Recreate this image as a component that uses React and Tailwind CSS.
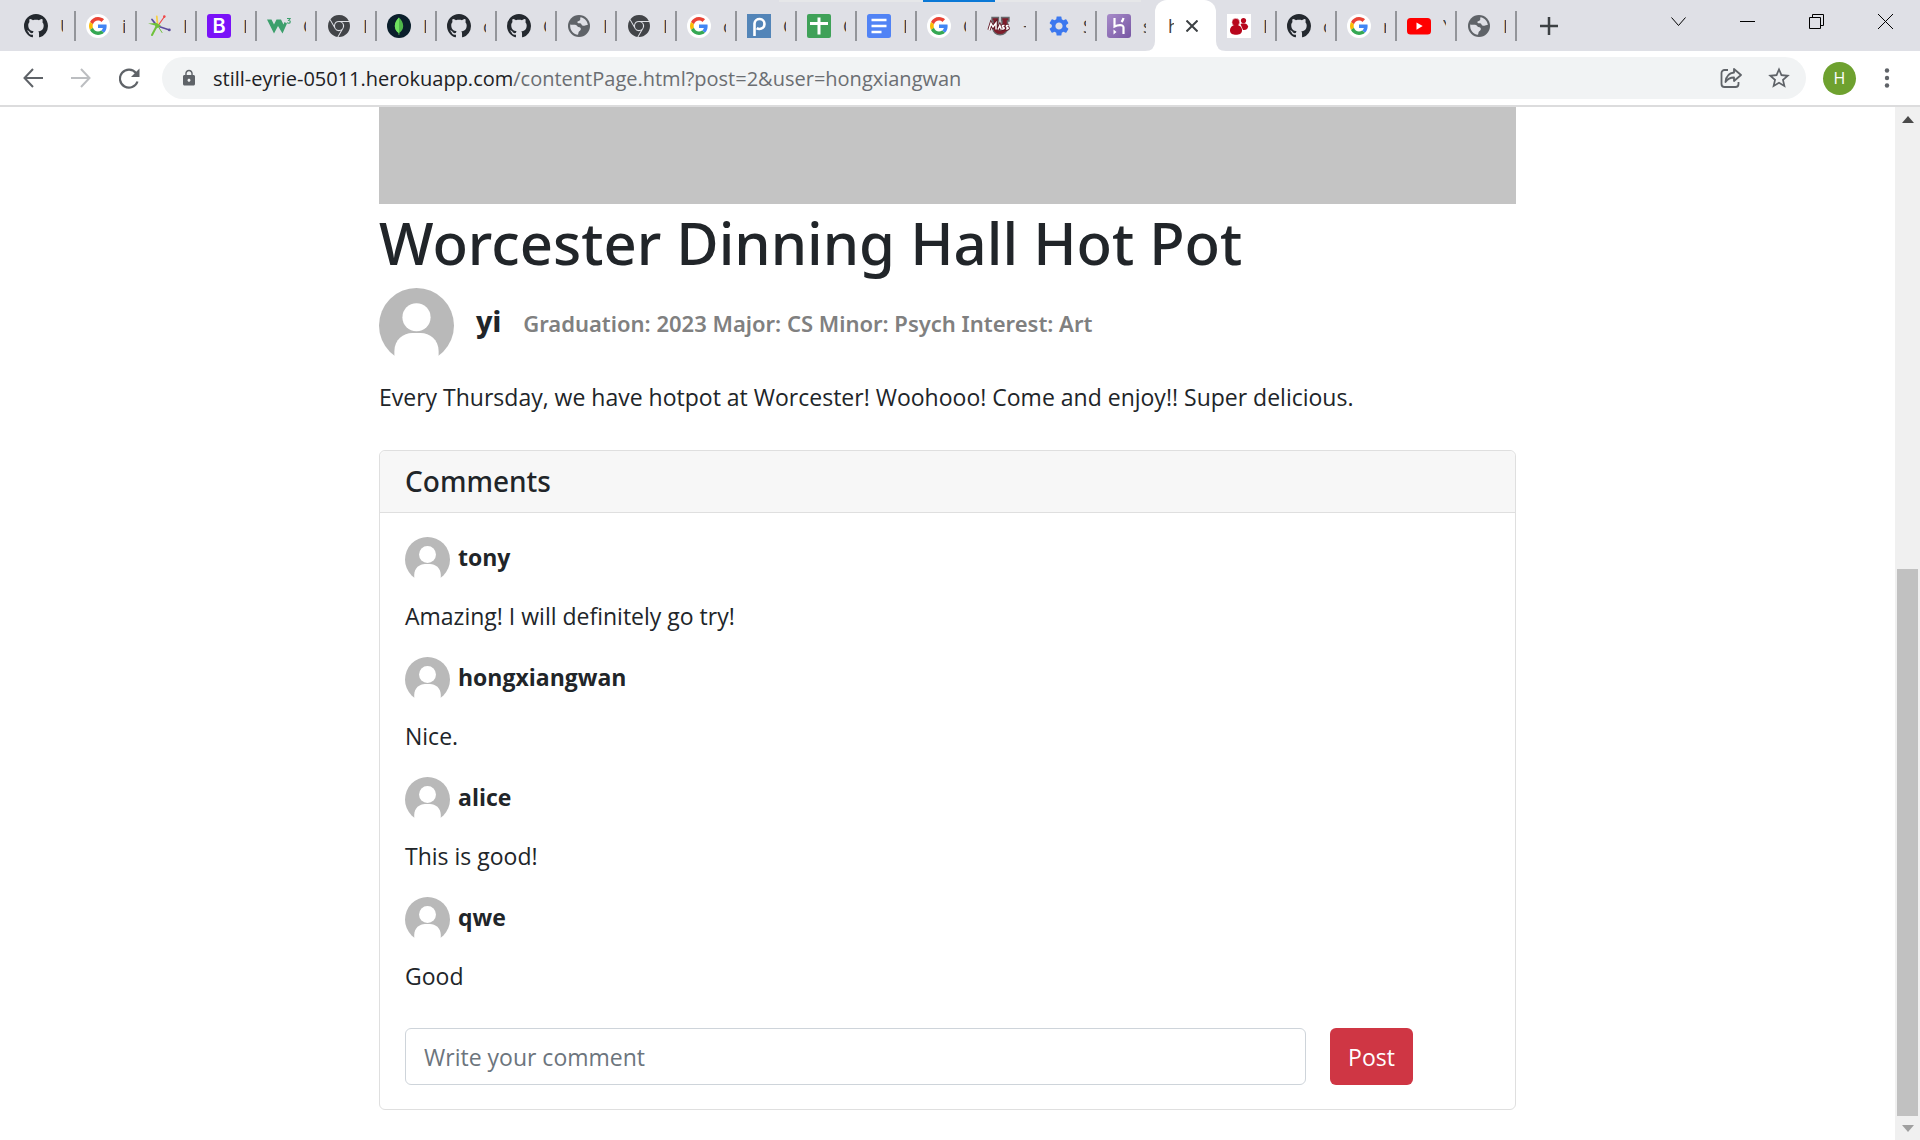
import { VscGithubInverted } from "react-icons/vsc";
import { SiGooglechrome } from "react-icons/si";
import { MdSettings, MdStarBorder, MdLock } from "react-icons/md";

const Github = () => <VscGithubInverted className="size-6 text-[#24292f]" />;

const Google = () => (
  <span className="flex size-6 items-center justify-center rounded-full bg-white">
    <svg viewBox="0 0 48 48" className="size-[18px]">
      <path fill="#EA4335" d="M24 9.5c3.54 0 6.71 1.22 9.21 3.6l6.85-6.85C35.9 2.38 30.47 0 24 0 14.62 0 6.51 5.38 2.56 13.22l7.98 6.19C12.43 13.72 17.74 9.5 24 9.5z" />
      <path fill="#4285F4" d="M46.98 24.55c0-1.57-.15-3.09-.38-4.55H24v9.02h12.94c-.58 2.96-2.26 5.48-4.78 7.18l7.73 6c4.51-4.18 7.09-10.36 7.09-17.65z" />
      <path fill="#FBBC05" d="M10.53 28.59c-.48-1.45-.76-2.99-.76-4.59s.27-3.14.76-4.59l-7.98-6.19C.92 16.46 0 20.12 0 24s.92 7.54 2.56 10.78l7.97-6.19z" />
      <path fill="#34A853" d="M24 48c6.48 0 11.93-2.13 15.89-5.81l-7.73-6c-2.15 1.45-4.92 2.3-8.16 2.3-6.26 0-11.57-4.22-13.47-9.91l-7.98 6.19C6.51 42.62 14.62 48 24 48z" />
    </svg>
  </span>
);

const Burst = () => (
  <svg viewBox="0 0 24 24" className="size-6" strokeLinecap="round" fill="none">
    <path d="M11.500 11 17.500 2.500" stroke="#ef4a4a" strokeWidth="1.200" />
    <circle cx="17.300" cy="2.600" r="1.300" fill="#ef4a4a" />
    <path d="M10.500 10 9.800 2.500" stroke="#f7d04a" strokeWidth="1.800" />
    <path d="M9 10.500 5 5.500" stroke="#5b4a9e" strokeWidth="1.800" />
    <path d="M12 12.500 22.500 16" stroke="#5b4a9e" strokeWidth="1.500" />
    <circle cx="22.300" cy="15.900" r="1.400" fill="#5b4a9e" />
    <path d="M1 9.500 9.500 9 14 11.500 9.500 14.500 8 11.500z" fill="#6fc13b" />
    <path d="M9.500 12.500 5 21" stroke="#6fc13b" strokeWidth="2" />
    <path d="M11.500 13 15 18.500" stroke="#6fc13b" strokeWidth="1" />
  </svg>
);

const Bootstrap = () => (
  <span className="flex size-6 items-center justify-center rounded-[3px] bg-[#7a12f8] font-['Inter',sans-serif] text-xl leading-6 font-semibold text-white">B</span>
);

const W3 = () => (
  <svg viewBox="0 0 24 24" className="size-6" fill="#3c9f6c">
    <path d="M0 5.500h4.500l2.500 5 2.500-5H14l2.500 5 1-2.500 2.500 1.500-4.500 10-4.500-7.500-4 7.500z" />
    <path d="M20 4.500h3.200l-1.500 1.900c2.200 0 1.900 3-.1 2.900-.7 0-1.200-.3-1.400-.8" fill="none" stroke="#3c9f6c" strokeWidth="1.100" />
  </svg>
);

const Chrome = () => (
  <span className="flex size-6 items-center justify-center">
    <SiGooglechrome className="size-[22px] text-[#424448]" />
  </span>
);

const Mongo = () => (
  <svg viewBox="0 0 24 24" className="size-6">
    <circle cx="12" cy="12" r="12" fill="#0a1e2b" />
    <path d="M12 3.5c2.6 2.6 4.2 5.3 4.2 8.4 0 3-1.700 5.400-3.700 6.800L12.300 21h-.7l-.2-2.300c-2.100-1.500-3.600-3.800-3.600-6.800 0-3.100 1.600-5.800 4.200-8.400z" fill="#4fb64a" />
    <path d="M12 3.5c-2.600 2.600-4.200 5.300-4.200 8.400 0 3 1.500 5.300 3.600 6.800L12 19z" fill="#6fe060" />
  </svg>
);

const Globe = () => (
  <svg viewBox="0 0 24 24" className="size-6">
    <circle cx="12" cy="12" r="11" fill="#5f6368" />
    <path d="M3.200 10.500c2 .6 4 0 5.600.4 1.800.4 1.300 1.700 2.700 2.100 1.600.4 2.700.8 2.300 2.500-.3 1.300-1.900 1.600-2.300 3-.2.900-.2 1.600-.5 2.300-4.900-.4-8.300-4.700-7.800-10.300z" fill="#dfe0e6" />
    <path d="M13.500 3.200c-.8 1.600.4 2.400-.9 3.300-1 .7-2.300.5-2.200 1.700.1 1.300 1.700.8 2.800 1.100 1.500.4 1.100 2.200 2.700 2.500 1.900.4 2.600-1.300 4.900-.8-.3-3.900-3.200-7.200-7.300-7.800z" fill="#dfe0e6" />
  </svg>
);

const Pandas = () => (
  <svg viewBox="0 0 24 24" className="size-6" fill="none" stroke="#fff" strokeWidth="2.600">
    <rect width="24" height="24" fill="#5385b8" stroke="none" />
    <path d="M7.500 22V9.500a5 5 0 1 1 5 5.500c-1.300 0-2-.3-2.800-.9" />
  </svg>
);

const Sheets = () => (
  <svg viewBox="0 0 24 24" className="size-6">
    <rect width="24" height="24" rx="2" fill="#3fa158" />
    <path d="M3 9.500h18M12 3.500v17" stroke="#fff" strokeWidth="3" />
  </svg>
);

const Docs = () => (
  <svg viewBox="0 0 24 24" className="size-6">
    <rect width="24" height="24" rx="2.500" fill="#5183f5" />
    <path d="M4.500 6h15M4.500 12h15M4.500 18h10" stroke="#fff" strokeWidth="2.400" />
  </svg>
);

const Umass = () => (
  <svg viewBox="0 0 24 24" className="size-6">
    <path d="M5 3.500h6.500v3H11V14c0 2.500 4 2.500 4 0V6.500h-.5v-3H22v3.500h-1.500V14c0 9-15 9-14.500 0V7H5z" fill="#7f1d2b" stroke="#66676b" strokeWidth="1.400" />
    <path d="M2 16 4 9.500 6 13 9 9v6.500M11 15.500l1.800-4 1.500 4M17.500 11.500c-3-.5-2.500 1.500-1 2s.5 2-1.500 1.500M21.500 11.500c-3-.5-2.500 1.500-1 2s.5 2-1.500 1.500" fill="none" stroke="#5e1320" strokeWidth="3.200" />
    <path d="M2 16 4 9.500 6 13 9 9v6.500M11 15.500l1.800-4 1.500 4M17.500 11.500c-3-.5-2.500 1.500-1 2s.5 2-1.500 1.500M21.500 11.500c-3-.5-2.500 1.500-1 2s.5 2-1.500 1.500" fill="none" stroke="#fff" strokeWidth="1.500" />
  </svg>
);

const Gear = () => <MdSettings className="size-6 text-[#3c78ef]" />;

const Heroku = () => (
  <svg viewBox="0 0 24 24" className="size-6">
    <defs>
      <linearGradient id="heroku" x1="0" y1="0" x2="1" y2="1">
        <stop offset="0" stopColor="#a78bc9" />
        <stop offset="1" stopColor="#7756a3" />
      </linearGradient>
    </defs>
    <rect width="24" height="24" rx="3" fill="url(#heroku)" />
    <path d="M7.500 4v8.500c2.500-1.200 9-2.700 9 1V20" fill="none" stroke="#fff" strokeWidth="2.200" />
    <path d="M14.500 8c1-1.200 1.700-2.500 2-4" fill="none" stroke="#fff" strokeWidth="2.200" />
    <path d="M6.500 15.500 9.500 18l-3 2.500z" fill="#fff" />
  </svg>
);

const People = () => (
  <svg viewBox="0 0 24 24" className="size-6">
    <rect width="24" height="24" fill="#fff" />
    <g fill="#b8061c">
      <circle cx="16.500" cy="6.500" r="2.600" />
      <path d="M13.500 10c2-1.500 7-1.200 7.500 2.300.3 2.500-2 4.200-5 3.700z" />
      <circle cx="8.800" cy="8.200" r="3.900" stroke="#fff" strokeWidth=".5" />
      <path d="M9 11c4 0 6 2.500 6 5.300 0 3.700-3 4.500-6 4.500s-6-.8-6-4.500C3 13.500 5 11 9 11z" />
    </g>
  </svg>
);

const Youtube = () => (
  <svg viewBox="0 0 24 24" className="size-6">
    <rect y="4" width="24" height="16.500" rx="3.500" fill="#f00" />
    <path d="M9.500 8.500v7.200l6.200-3.600z" fill="#fff" />
  </svg>
);

const middleTabs = [
  [Burst, "I"], [Bootstrap, "I"], [W3, "C"], [Chrome, "L"], [Mongo, "L"],
  [Github, "c"], [Github, "C"], [Globe, "I"], [Chrome, "L"], [Google, "c"], [Pandas, "C"],
  [Sheets, "C"], [Docs, "F"], [Google, "C"], [Umass, "+"], [Gear, "S"],
];
const lastTabs = [[Github, "c"], [Google, "r"], [Youtube, "Y"], [Globe, "I"]];

function Tab({ icon: Icon, title, className = "w-[60px] border-r-2 pl-2.5" }) {
  return (
    <button className={`flex h-[30px] shrink-0 items-center gap-3 border-[#93959a] ${className}`}>
      <Icon />
      <span className="w-[3px] overflow-hidden text-lg leading-6 text-[#3c4043]">{title}</span>
    </button>
  );
}

function TabStrip() {
  return (
    <header className="relative flex h-[51px] items-center bg-[#dfe0e6] pl-4">
      <div className="absolute left-[779px] top-0 h-0.5 w-[362px] bg-[#e6e7e9]">
        <div className="ml-36 h-0.5 w-[72px] bg-[#0a78d6]" />
      </div>
      <Tab icon={Github} title="U" className="w-[60px] border-r-2 pl-2" />
      <Tab icon={Google} title="i" className="w-[61px] border-r-2 pl-2.5" />
      {middleTabs.map(([icon, t], i) => <Tab key={i} icon={icon} title={t} />)}
      <Tab icon={Heroku} title="s" className="w-[58px] pl-2.5" />
      <div className="relative flex h-full w-[61px] shrink-0 items-center gap-3 rounded-t-xl bg-white pl-[13px]">
        <svg viewBox="0 0 10 10" className="absolute bottom-0 -left-2.5 size-2.5"><path d="M10 0v10H0Q10 10 10 0z" fill="#fff" /></svg>
        <svg viewBox="0 0 10 10" className="absolute bottom-0 -right-2.5 size-2.5"><path d="M0 0v10h10Q0 10 0 0z" fill="#fff" /></svg>
        <span className="w-[6px] overflow-hidden text-lg leading-6 text-[#3c4043]">h</span>
        <button aria-label="Close tab">
          <svg viewBox="0 0 12 12" className="size-3"><path d="m.5.5 11 11M11.500.5l-11 11" stroke="#3c4043" strokeWidth="2" /></svg>
        </button>
      </div>
      <Tab icon={People} title="F" className="w-[61px] border-r-2 pl-[11px]" />
      {lastTabs.map(([icon, t], i) => <Tab key={i} icon={icon} title={t} />)}
      <button aria-label="New tab" className="ml-[23px]">
        <svg viewBox="0 0 18 18" className="size-[18px]"><path d="M9 0v18M0 9h18" stroke="#3c4043" strokeWidth="2.500" /></svg>
      </button>
      <div className="ml-auto flex items-center gap-[54px] pr-[27px] pb-2 text-black">
        <button aria-label="Search tabs">
          <svg viewBox="0 0 15 15" className="size-[15px]"><path d="m.5 3.500 7 8 7-8" fill="none" stroke="currentColor" /></svg>
        </button>
        <button aria-label="Minimize">
          <svg viewBox="0 0 15 15" className="size-[15px]"><path d="M0 7.500h15" stroke="currentColor" /></svg>
        </button>
        <button aria-label="Restore">
          <svg viewBox="0 0 15 15" className="size-[15px]"><path d="M.5 3.500h11v11H.5zM3.500 3.500v-3h11v11h-3" fill="none" stroke="currentColor" /></svg>
        </button>
        <button aria-label="Close">
          <svg viewBox="0 0 15 15" className="size-[15px]"><path d="m0 0 15 15M15 0 0 15" stroke="currentColor" /></svg>
        </button>
      </div>
    </header>
  );
}

function Toolbar() {
  return (
    <nav className="flex h-14 items-center border-b-2 border-[#dcdcdd] bg-white pl-[23px] pr-[30px] text-[#5f6368]">
      <button aria-label="Back">
        <svg viewBox="0 0 20 20" className="size-5"><path d="M10 1 1.500 10l8.500 9M1.500 10H20" fill="none" stroke="currentColor" strokeWidth="2" /></svg>
      </button>
      <button aria-label="Forward" className="ml-7 text-[#bcbec1]">
        <svg viewBox="0 0 20 20" className="size-5"><path d="m10 1 8.500 9-8.500 9M18.500 10H0" fill="none" stroke="currentColor" strokeWidth="2" /></svg>
      </button>
      <button aria-label="Reload" className="ml-7">
        <svg viewBox="0 0 21 21" className="size-[21px]">
          <path d="M18.500 13.500a9 9 0 1 1-1.500-8.500" fill="none" stroke="currentColor" strokeWidth="2.200" />
          <path d="M20.500.500V9H12z" fill="currentColor" />
        </svg>
      </button>
      <div className="ml-[22px] flex h-[42px] flex-1 items-center rounded-full bg-[#f1f3f4] pl-[18px] pr-3.5">
        <MdLock className="size-[18px]" />
        <div className="ml-[15px] pt-0.5 text-xl text-[#6b6e72]">
          <span className="text-[#202124]">still-eyrie-05011.herokuapp.com</span>/contentPage.html?post=2&amp;user=hongxiangwan
        </div>
        <button aria-label="Share" className="ml-auto">
          <svg viewBox="0 0 22 22" className="size-[22px]" fill="none" stroke="currentColor" strokeWidth="1.800" strokeLinejoin="round">
            <path d="M8 3H4.500A3 3 0 0 0 1.500 6v11a3 3 0 0 0 3 3h11a3 3 0 0 0 3-3v-2" />
            <path d="M14 2l7 6-7 6v-3.500c-4 0-6.500 1.500-8.500 4.500.5-5 3.500-9 8.500-9.500z" />
          </svg>
        </button>
        <button aria-label="Bookmark" className="ml-6">
          <MdStarBorder className="size-[26px]" />
        </button>
      </div>
      <button className="ml-[17px] size-[33px] rounded-full bg-[#6ea12f] text-base text-white">H</button>
      <button aria-label="Menu" className="ml-7">
        <svg viewBox="0 0 6 20" className="h-5 w-[6px]" fill="currentColor">
          <circle cx="3" cy="2.500" r="2.200" /><circle cx="3" cy="10" r="2.200" /><circle cx="3" cy="17.500" r="2.200" />
        </svg>
      </button>
    </nav>
  );
}

function Avatar({ className }) {
  return (
    <svg viewBox="0 0 100 100" className={`shrink-0 ${className}`} role="img" aria-label="Avatar">
      <circle cx="50" cy="50" r="50" fill="#b9b9b9" />
      <circle cx="50" cy="39" r="18.800" fill="#fff" />
      <path d="M20.500 100V84c0-15 12-24 24-24h11c12 0 24 9 24 24v16z" fill="#fff" />
      <path d="M0 93h100v7H0z" fill="#fff" />
    </svg>
  );
}

const comments = [
  ["tony", "Amazing! I will definitely go try!"],
  ["hongxiangwan", "Nice."],
  ["alice", "This is good!"],
  ["qwe", "Good"],
];

function Comments() {
  return (
    <section className="mt-[35px] rounded-md border border-[#dfdfdf]">
      <h2 className="rounded-t-md border-b border-[#dfdfdf] bg-[#f7f7f7] px-[25px] py-3 font-['Noto_Sans',sans-serif] text-[28px] leading-[37px] font-medium">Comments</h2>
      <div className="px-[25px] py-6">
        {comments.map(([name, text]) => (
          <article key={name} className="mb-[23px]">
            <div className="flex items-center gap-2">
              <Avatar className="size-[45px]" />
              <h3 className="pb-1 font-bold">{name}</h3>
            </div>
            <p className="mt-4 leading-9">{text}</p>
          </article>
        ))}
        <form className="mt-[34px] flex gap-6 pr-[77px]" onSubmit={(e) => e.preventDefault()}>
          <input aria-label="Write your comment" placeholder="Write your comment" className="h-[57px] min-w-0 flex-1 rounded-md border border-[#ced4da] px-[18px] placeholder:text-[#6c757d]" />
          <button className="h-[57px] w-[83px] rounded-md bg-[#cf3644] pt-0.5 text-white">Post</button>
        </form>
      </div>
    </section>
  );
}

function Scrollbar() {
  return (
    <aside className="flex w-[25px] shrink-0 flex-col bg-[#f0f0f0] px-0.5">
      <button aria-label="Scroll up" className="flex h-[25px] items-center justify-center">
        <svg viewBox="0 0 12 7" className="h-[7px] w-3"><path d="M6 0 12 7H0z" fill="#4a4a4a" /></svg>
      </button>
      <div className="flex-[437]" />
      <div className="flex-[547] bg-[#c1c1c1]" />
      <button aria-label="Scroll down" className="flex h-6 items-center justify-center">
        <svg viewBox="0 0 12 7" className="h-[7px] w-3"><path d="M6 7 0 0h12z" fill="#a0a0a0" /></svg>
      </button>
    </aside>
  );
}

export default function App() {
  return (
    <div className="flex min-h-screen flex-col bg-white font-['Open_Sans','Noto_Sans',sans-serif] text-[#212529]">
      <TabStrip />
      <Toolbar />
      <div className="flex flex-1">
        <main className="flex-1 text-[23px]">
          <div className="mx-auto max-w-[1137px]">
            <div className="h-[97px] bg-[#c4c4c4]" />
            <h1 className="pt-1 font-['Noto_Sans',sans-serif] text-[58px] leading-[70px] font-medium">Worcester Dinning Hall Hot Pot</h1>
            <div className="mt-2.5 flex items-center">
              <Avatar className="size-[75px]" />
              <div className="flex items-baseline gap-[22px] pb-2 pl-[22px] font-['Noto_Sans',sans-serif]">
                <strong className="text-[28px] leading-9 font-extrabold">yi</strong>
                <span className="text-[22px] leading-9 font-semibold text-[#808080]">Graduation: 2023 Major: CS Minor: Psych Interest: Art</span>
              </div>
            </div>
            <p className="mt-4 leading-9">Every Thursday, we have hotpot at Worcester! Woohooo! Come and enjoy!! Super delicious.</p>
            <Comments />
          </div>
        </main>
        <Scrollbar />
      </div>
    </div>
  );
}
